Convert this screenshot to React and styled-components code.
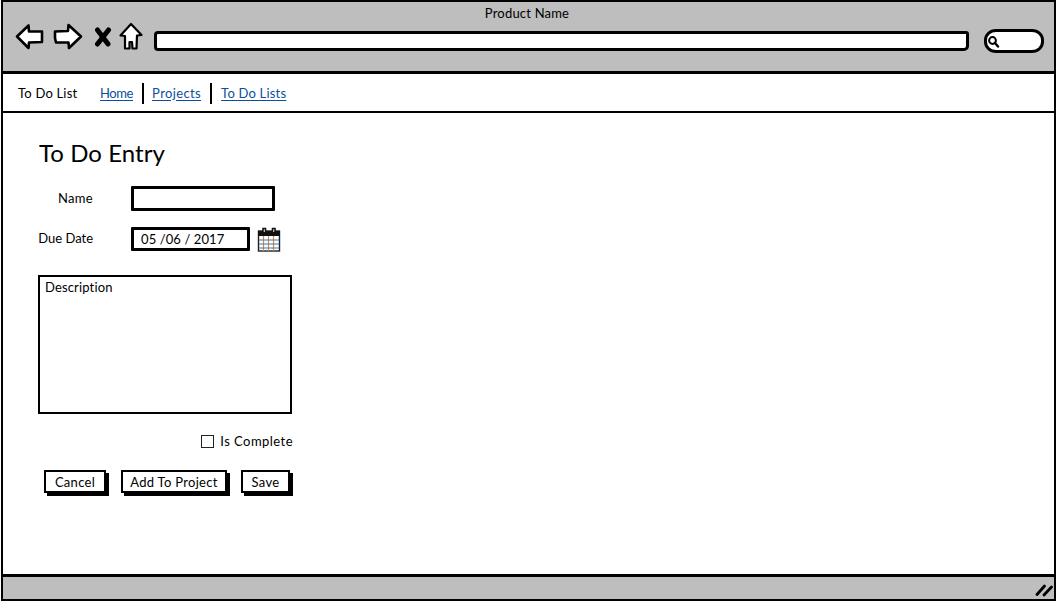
import React from "react";
import styled, { createGlobalStyle } from "styled-components";

const Global = createGlobalStyle`
  html, body { margin: 0; padding: 0; background: #fff; }
  body { font-family: "Lato", "Open Sans", sans-serif; color: #000; }
`;

const Frame = styled.div`
  box-sizing: border-box;
  width: 1055px;
  height: 601px;
  margin-left: 1px;
  border: 2px solid #000;
  display: flex;
  flex-direction: column;
  overflow: hidden;
`;
const Toolbar = styled.header`
  box-sizing: border-box;
  height: 72px;
  background: #bebebe;
  border-bottom: 3px solid #000;
  padding: 4px 10px 0 12px;
  flex: none;
`;
const Title = styled.div`
  text-align: center;
  font-size: 13px;
  line-height: 15px;
  letter-spacing: 0.2px;
  padding-right: 5px;
`;
const ToolRow = styled.div`
  display: flex;
  align-items: center;
  margin-top: -1px;
  height: 33px;
`;
const IconSlot = styled.svg`
  display: block;
  flex: none;
  margin-left: ${(p) => p.$ml || 0}px;
`;
const Address = styled.div`
  box-sizing: border-box;
  flex: none;
  width: 815px;
  height: 20px;
  margin: 8px 0 0 11px;
  background: #fff;
  border: 3px solid #000;
  border-radius: 4px 3px 5px 4px;
`;
const Search = styled.div`
  box-sizing: border-box;
  flex: none;
  width: 60px;
  height: 24px;
  margin: 9px 0 0 15px;
  background: #fff;
  border: 3px solid #000;
  border-radius: 12px / 11px;
  display: flex;
  align-items: center;
`;
const Nav = styled.nav`
  box-sizing: border-box;
  flex: none;
  height: 39px;
  border-bottom: 2px solid #000;
  padding: 0 0 0 15px;
  display: flex;
  align-items: center;
  font-size: 13px;
`;
const Brand = styled.span`
  width: 82px;
  letter-spacing: 0.2px;
`;
const NavLink = styled.a`
  color: #0b4f9c;
  text-decoration: underline;
  text-underline-offset: 2px;
  letter-spacing: ${(p) => p.$ls ?? 0.2}px;
`;
const Sep = styled.span`
  width: 2px;
  height: 21px;
  background: #000;
  margin: 2px ${(p) => p.$mr}px 0 9px;
`;
const Main = styled.main`
  flex: 1;
  padding: 26px 0 0 35px;
  width: 256px;
`;
const Heading = styled.h1`
  margin: 0 0 0 1px;
  font-size: 24px;
  line-height: 28px;
  font-weight: 400;
  letter-spacing: 0.05px;
`;
const Row = styled.div`
  display: flex;
  align-items: center;
  height: 25px;
  margin-top: ${(p) => p.$mt}px;
`;
const Label = styled.label`
  width: 55px;
  text-align: right;
  margin-right: 38px;
  font-size: 13px;
  letter-spacing: ${(p) => p.$ls ?? 0.3}px;
  padding-bottom: 2px;
  white-space: nowrap;
`;
const Input = styled.div`
  box-sizing: border-box;
  width: ${(p) => p.$w}px;
  height: ${(p) => p.$h}px;
  border: 3px solid #000;
  border-radius: 1px;
  padding-left: 7px;
  font-size: 13px;
  line-height: 19px;
  letter-spacing: 0.1px;
  white-space: pre;
`;
const TextArea = styled.div`
  box-sizing: border-box;
  width: 254px;
  height: 139px;
  margin: 24px 0 0 0;
  border: 2.5px solid #000;
  padding: 2px 5px;
  font-size: 13px;
  line-height: 16px;
  letter-spacing: 0.15px;
`;
const CheckRow = styled.div`
  display: flex;
  align-items: center;
  justify-content: flex-end;
  width: 255px;
  margin-top: 19px;
  font-size: 13px;
  line-height: 16px;
  letter-spacing: 0.45px;
`;
const Check = styled.span`
  box-sizing: border-box;
  width: 13px;
  height: 13px;
  border: 1px solid #222;
  margin-right: 6px;
`;
const Buttons = styled.div`
  display: flex;
  margin: 21px 0 0 6px;
`;
const Button = styled.button`
  box-sizing: border-box;
  height: 23px;
  width: ${(p) => p.$w}px;
  margin-right: ${(p) => p.$mr || 0}px;
  padding: 0;
  background: #fff;
  color: #000;
  border: 2px solid #000;
  box-shadow: 3px 3px 0 #000;
  font-family: inherit;
  font-size: 13px;
  letter-spacing: 0.3px;
`;
const Status = styled.footer`
  box-sizing: border-box;
  flex: none;
  height: 25px;
  background: #bebebe;
  border-top: 3px solid #000;
  display: flex;
  justify-content: flex-end;
  align-items: flex-end;
  padding: 0 1px 2px 0;
`;

const ic = { stroke: "#000", strokeWidth: 2.6, strokeLinejoin: "round", strokeLinecap: "round" };

export default function App() {
  return (
    <>
      <Global />
      <Frame>
        <Toolbar>
          <Title>Product Name</Title>
          <ToolRow>
            <IconSlot width="29" height="29" viewBox="0 0 29 29">
              <path d="M2 14.5 13.5 3.5 14 9.5 27 9.5 27 20 14 20.5 13.5 26Z" fill="#fff" {...ic} />
            </IconSlot>
            <IconSlot $ml="9" width="30" height="29" viewBox="0 0 30 29">
              <path d="M2 9.5 15 9 15.5 3 28 14.5 16 26 15.5 20.5 3 20.5 2 16Z" fill="#fff" {...ic} />
            </IconSlot>
            <IconSlot $ml="11" width="18" height="22" viewBox="0 0 18 22">
              <path d="M3.5 4 14 18M14.5 4 3.5 18" fill="none" stroke="#000" strokeWidth="5" strokeLinecap="round" />
            </IconSlot>
            <IconSlot $ml="7" width="24" height="29" viewBox="0 0 24 29">
              <path d="M12 2 22.5 13 18 13.5 17.5 26.5 13.5 26.5 13 20 10.5 20 10.5 26.5 6 26.5 6 14 1.5 13.5Z" fill="#fff" {...ic} strokeWidth="2.2" />
            </IconSlot>
            <Address />
            <Search>
              <svg width="13" height="13" viewBox="0 0 13 13">
                <circle cx="5.5" cy="5.5" r="3.4" fill="none" stroke="#000" strokeWidth="2" />
                <path d="M8 8 11 11.5" stroke="#000" strokeWidth="2.4" strokeLinecap="round" />
              </svg>
            </Search>
          </ToolRow>
        </Toolbar>
        <Nav>
          <Brand>To Do List</Brand>
          <NavLink $ls={-0.4}>Home</NavLink>
          <Sep $mr={8} />
          <NavLink $ls={0.38}>Projects</NavLink>
          <Sep $mr={9} />
          <NavLink>To Do Lists</NavLink>
        </Nav>
        <Main>
          <Heading>To Do Entry</Heading>
          <Row $mt="19">
            <Label>Name</Label>
            <Input $w={144} $h={25} />
          </Row>
          <Row $mt="15">
            <Label $ls={0}>Due Date</Label>
            <Input $w={119} $h={24}>05 /06 / 2017</Input>
            <IconSlot $ml="7" width="24" height="26" viewBox="0 0 24 26">
              <rect x="1.5" y="5" width="21" height="20" fill="#fff" stroke="#222" strokeWidth="1.4" />
              <path d="M1 5h22v5H1z" fill="#111" />
              <path d="M6.5 10v15M11.5 10v15M16.5 10v15" stroke="#e08a2e" strokeWidth="1.2" />
              <path d="M2 14h20M2 18h20M2 22h20" stroke="#3a78c2" strokeWidth="1.2" />
              <path d="M6 6V2.5h2.5V6M15.5 6V2.5H18V6" fill="#fff" stroke="#111" strokeWidth="1.6" />
            </IconSlot>
          </Row>
          <TextArea>Description</TextArea>
          <CheckRow>
            <Check />
            Is Complete
          </CheckRow>
          <Buttons>
            <Button $w={62} $mr={15}>Cancel</Button>
            <Button $w={106} $mr={14}>Add To Project</Button>
            <Button $w={49}>Save</Button>
          </Buttons>
        </Main>
        <Status>
          <svg width="18" height="15" viewBox="0 0 18 15">
            <path d="M2 12.5 9.5 4M9 13 16.5 5" stroke="#000" strokeWidth="2.8" strokeLinecap="round" />
          </svg>
        </Status>
      </Frame>
    </>
  );
}
